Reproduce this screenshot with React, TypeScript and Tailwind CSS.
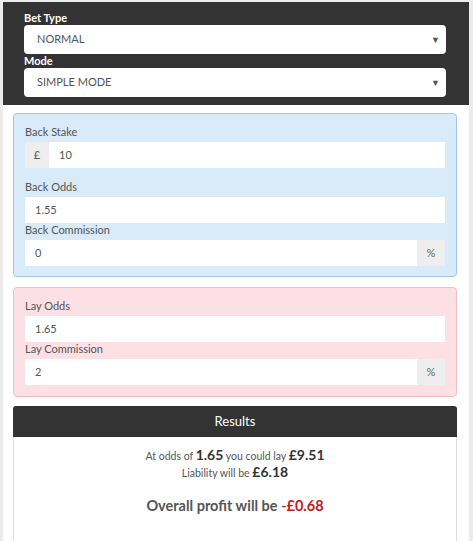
import React from "react";

const font = { fontFamily: "Lato, 'Open Sans', sans-serif" };

function Select({ value }: { value: string }) {
  return (
    <div className="flex h-[29px] items-center justify-between rounded-[4px] bg-white pl-[13px] pr-[6px] text-[11px] text-[#555]">
      <span>{value}</span>
      <span className="text-[9px] text-[#555]">▼</span>
    </div>
  );
}

function Label({ children }: { children: React.ReactNode }) {
  return <div className="mb-[3px] h-[14px] text-[11px] leading-[14px] text-[#555]">{children}</div>;
}

function Input({ value, prefix, suffix }: { value: string; prefix?: string; suffix?: string }) {
  return (
    <div className="flex h-[26px] text-[11px] text-[#555]">
      {prefix && (
        <div className="flex w-[24px] items-center justify-center bg-[#eeeeee] text-[#555]">{prefix}</div>
      )}
      <div className="flex flex-1 items-center bg-white pl-[10px]">{value}</div>
      {suffix && (
        <div className="flex w-[28px] items-center justify-center bg-[#eeeeee] text-[#666]">{suffix}</div>
      )}
    </div>
  );
}

export default function App() {
  return (
    <div className="bg-[#ececec] pl-[3px] pr-[4px] pt-[2px]" style={font}>
      <div className="bg-white">
        <div className="bg-[#333333] pb-[8px] pl-[21px] pr-[23px] pt-[8px]">
          <div className="h-[15px] text-[11px] font-bold leading-[15px] text-white">Bet Type</div>
          <Select value="NORMAL" />
          <div className="h-[14px] text-[11px] font-bold leading-[14px] text-white">Mode</div>
          <Select value="SIMPLE MODE" />
        </div>

        <div className="ml-[10px] mr-[12px] pt-[8px]">
          <div className="rounded-[4px] border border-[#9fc8e6] bg-[#d9eaf8] px-[11px] pb-[10px] pt-[11px]">
            <Label>Back Stake</Label>
            <Input prefix="£" value="10" />
            <div className="h-[12px]" />
            <Label>Back Odds</Label>
            <Input value="1.55" />
            <Label>Back Commission</Label>
            <Input value="0" suffix="%" />
          </div>

          <div className="mt-[10px] rounded-[4px] border border-[#f2bcc6] bg-[#fde0e6] px-[11px] pb-[11px] pt-[11px]">
            <Label>Lay Odds</Label>
            <Input value="1.65" />
            <Label>Lay Commission</Label>
            <Input value="2" suffix="%" />
          </div>

          <div className="mt-[9px]">
            <div className="flex h-[31px] items-center justify-center rounded-t-[3px] bg-[#333333] text-[13px] text-white">
              Results
            </div>
            <div className="border-x border-[#dddddd] pb-[60px] pt-[10px] text-center">
              <div className="text-[10.5px] leading-[15px] text-[#555]">
                At odds of <span className="text-[14px] font-bold text-[#333]">1.65</span> you could lay{" "}
                <span className="text-[14px] font-bold text-[#333]">£9.51</span>
              </div>
              <div className="text-[10.5px] leading-[15px] text-[#555]">
                Liability will be <span className="text-[14px] font-bold text-[#333]">£6.18</span>
              </div>
              <div className="mt-[14px] text-[14.5px] font-bold text-[#555]">
                Overall profit will be <span className="font-normal text-[#c4161c]">-</span>
                <span className="text-[#c4161c]">£0.68</span>
              </div>
            </div>
          </div>
        </div>
      </div>
    </div>
  );
}
